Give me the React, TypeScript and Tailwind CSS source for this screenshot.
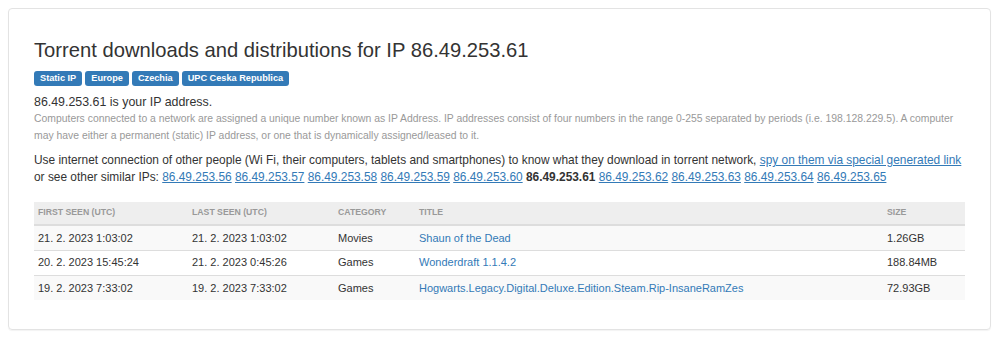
import React from "react";

const labels = ["Static IP", "Europe", "Czechia", "UPC Ceska Republica"];
const before = ["86.49.253.56", "86.49.253.57", "86.49.253.58", "86.49.253.59", "86.49.253.60"];
const after = ["86.49.253.62", "86.49.253.63", "86.49.253.64", "86.49.253.65"];

const rows = [
  ["21. 2. 2023 1:03:02", "21. 2. 2023 1:03:02", "Movies", "Shaun of the Dead", "1.26GB"],
  ["20. 2. 2023 15:45:24", "21. 2. 2023 0:45:26", "Games", "Wonderdraft 1.1.4.2", "188.84MB"],
  ["19. 2. 2023 7:33:02", "19. 2. 2023 7:33:02", "Games", "Hogwarts.Legacy.Digital.Deluxe.Edition.Steam.Rip-InsaneRamZes", "72.93GB"],
];

export default function App() {
  return (
    <div className="w-[1000px] h-[339px] bg-white pt-[8px] pl-[8px] font-['Liberation_Sans',Arial,sans-serif] text-[#333]">
      <div className="w-[983px] h-[322px] border border-[#e3e3e3] rounded-[4px] shadow-[0_1px_1px_rgba(0,0,0,0.05)] pl-[25px] pr-[24px] pt-[29px]">
        <h3 className="text-[20.2px] leading-[24px] font-normal text-[#333]">
          Torrent downloads and distributions for IP 86.49.253.61
        </h3>
        <div className="flex gap-[3px] mt-[9px]">
          {labels.map((l) => (
            <span
              key={l}
              className="inline-block h-[15px] leading-[15px] px-[6px] bg-[#337ab7] text-white font-bold text-[9.2px] rounded-[3px]"
            >
              {l}
            </span>
          ))}
        </div>
        <p className="mt-[9px] text-[12.4px] leading-[15px]">86.49.253.61 is your IP address.</p>
        <p className="text-[10.4px] leading-[17px] text-[#999]">
          Computers connected to a network are assigned a unique number known as IP Address. IP addresses consist of four numbers in the range 0-255 separated by periods (i.e. 198.128.229.5). A computer may have either a permanent (static) IP address, or one that is dynamically assigned/leased to it.
        </p>
        <p className="mt-[8px] text-[11.9px] leading-[17px]">
          <span className="whitespace-nowrap">
            Use internet connection of other people (Wi Fi, their computers, tablets and smartphones) to know what they download in torrent network,{" "}
            <a className="text-[#337ab7] underline">spy on them via special generated link</a>
          </span>
          <br />
          or see other similar IPs:{" "}
          {before.map((ip) => (
            <React.Fragment key={ip}>
              <a className="text-[#337ab7] underline">{ip}</a>{" "}
            </React.Fragment>
          ))}
          <b className="font-bold">86.49.253.61</b>{" "}
          {after.map((ip, i) => (
            <React.Fragment key={ip}>
              <a className="text-[#337ab7] underline">{ip}</a>
              {i < after.length - 1 ? " " : ""}
            </React.Fragment>
          ))}
        </p>
        <table className="mt-[16px] w-[931px] border-collapse text-[11px]">
          <thead>
            <tr className="bg-[#eee] border-b-2 border-[#ddd]">
              <th className="w-[154px] h-[23px] pl-[4px] text-left text-[8.7px] font-bold text-[#999] uppercase">First seen (UTC)</th>
              <th className="w-[146px] pl-[4px] text-left text-[8.7px] font-bold text-[#999] uppercase">Last seen (UTC)</th>
              <th className="w-[81px] pl-[4px] text-left text-[8.7px] font-bold text-[#999] uppercase">Category</th>
              <th className="w-[468px] pl-[4px] text-left text-[8.7px] font-bold text-[#999] uppercase">Title</th>
              <th className="pl-[4px] text-left text-[8.7px] font-bold text-[#999] uppercase">Size</th>
            </tr>
          </thead>
          <tbody>
            {rows.map((r, i) => (
              <tr key={i} className={`${i % 2 === 0 ? "bg-[#f9f9f9]" : "bg-white"} ${i > 0 ? "border-t border-[#ddd]" : ""}`}>
                <td className="h-[25px] pl-[4px]">{r[0]}</td>
                <td className="pl-[4px]">{r[1]}</td>
                <td className="pl-[4px]">{r[2]}</td>
                <td className="pl-[4px]"><a className="text-[#337ab7]">{r[3]}</a></td>
                <td className="pl-[4px]">{r[4]}</td>
              </tr>
            ))}
          </tbody>
        </table>
      </div>
    </div>
  );
}
